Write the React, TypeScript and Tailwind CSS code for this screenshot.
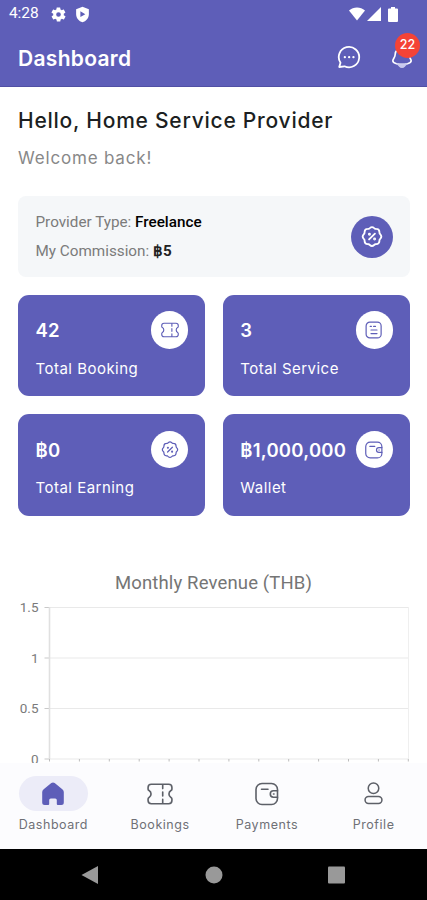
import React, { useState } from 'react';

type IconProps = { className?: string; strokeWidth?: number };

const stroke = {
  viewBox: '0 0 24 24',
  fill: 'none',
  stroke: 'currentColor',
  strokeLinecap: 'round',
  strokeLinejoin: 'round',
} as const;

function TicketIcon({ className, strokeWidth = 1.5 }: IconProps) {
  return (
    <svg {...stroke} strokeWidth={strokeWidth} className={className}>
      <path d="M4 3h16a3 3 0 0 1 3 3v1.500c0 .7-.4 1-.9 1.300a3.700 3.700 0 0 0 0 6.400c.5.300.9.600.9 1.300V18a3 3 0 0 1-3 3H4a3 3 0 0 1-3-3v-1.500c0-.7.4-1 .9-1.300a3.700 3.700 0 0 0 0-6.400C1.400 8.500 1 8.200 1 7.500V6a3 3 0 0 1 3-3z" />
      <path d="M14.500 3.500v3.500M14.500 10.200v3.600M14.500 17v3.500" />
    </svg>
  );
}

function ListIcon({ className, strokeWidth = 1.6 }: IconProps) {
  return (
    <svg {...stroke} strokeWidth={strokeWidth} className={className}>
      <rect x="1.500" y="1.500" width="20" height="21" rx="5" />
      <path d="M7 7.200h1.500M8 12h8M8 16.800h8M11.500 7.200H14" />
    </svg>
  );
}

function PercentIcon({ className, strokeWidth = 1.6 }: IconProps) {
  return (
    <svg {...stroke} strokeWidth={strokeWidth} className={className}>
      <path d="M9.600 2.300a3.600 3.600 0 0 1 4.800 0l1 .8 1.300.1a3.600 3.600 0 0 1 3.400 3.400l.1 1.300.9 1.200a3.600 3.600 0 0 1 0 4.800l-.9 1.100-.1 1.400a3.600 3.600 0 0 1-3.400 3.400l-1.300.1-1.100.9a3.600 3.600 0 0 1-4.700 0l-1-.9-1.300-.1a3.600 3.600 0 0 1-3.400-3.400l-.1-1.400-.9-1.100a3.600 3.600 0 0 1 0-4.800l.9-1.200.1-1.300a3.600 3.600 0 0 1 3.400-3.400l1.300-.1z" />
      <path d="M15.200 8.300l-6.400 6.400" />
      <circle cx="9.200" cy="9" r=".6" fill="currentColor" />
      <circle cx="14.800" cy="14.200" r=".6" fill="currentColor" />
    </svg>
  );
}

function WalletIcon({ className, strokeWidth = 1.6 }: IconProps) {
  return (
    <svg {...stroke} strokeWidth={strokeWidth} className={className}>
      <rect x="1" y="1.500" width="21.500" height="21" rx="6" />
      <path d="M22.500 8.800h-4a3.200 3.200 0 0 0 0 6.400h4M18.500 12h.5M6.500 7.200H13" />
    </svg>
  );
}

function ProfileIcon({ className }: IconProps) {
  return (
    <svg {...stroke} strokeWidth={1.6} className={className}>
      <circle cx="12" cy="6.500" r="5.500" />
      <rect x="3.200" y="15.200" width="17.600" height="7.300" rx="3.600" />
    </svg>
  );
}

function HomeIcon({ className }: IconProps) {
  return (
    <svg viewBox="0 0 24 24" fill="currentColor" className={className}>
      <path d="M10.300 1.100a2.800 2.800 0 0 1 3.400 0l7.600 6.200A3.400 3.400 0 0 1 22.800 10v10.500a2.500 2.500 0 0 1-2.500 2.500h-3.500a1 1 0 0 1-1-1v-4a1.600 1.600 0 0 0-1.600-1.600H9.800A1.600 1.600 0 0 0 8.200 18v4a1 1 0 0 1-1 1H3.700a2.500 2.500 0 0 1-2.500-2.500V10a3.400 3.400 0 0 1 1.500-2.700z" />
    </svg>
  );
}

const stats = [
  { value: '42', label: 'Total Booking', Icon: TicketIcon },
  { value: '3', label: 'Total Service', Icon: ListIcon },
  { value: '฿0', label: 'Total Earning', Icon: PercentIcon },
  { value: '฿1,000,000', label: 'Wallet', Icon: WalletIcon },
];

const tabs = [
  { id: 'dashboard', label: 'Dashboard', Icon: HomeIcon },
  { id: 'bookings', label: 'Bookings', Icon: TicketIcon },
  { id: 'payments', label: 'Payments', Icon: WalletIcon },
  { id: 'profile', label: 'Profile', Icon: ProfileIcon },
];

function StatusBar() {
  return (
    <div className="flex h-7 items-center pl-[9px] pr-[29px] text-white">
      <span className="w-[41px] font-['Roboto',sans-serif] text-[15.5px] tracking-[-0.1px]">4:28</span>
      <svg viewBox="0 0 24 24" className="h-[17px] w-[17px]" fill="currentColor">
        <path fillRule="evenodd" d="M19.400 13c.1-.3.1-.7.1-1s0-.7-.1-1l2.100-1.600c.2-.2.200-.4.100-.6l-2-3.500c-.1-.2-.4-.3-.6-.2l-2.500 1c-.5-.4-1.100-.7-1.700-1l-.4-2.600c0-.3-.2-.5-.5-.5h-4c-.2 0-.5.2-.5.4l-.4 2.700c-.6.2-1.100.6-1.700 1l-2.500-1c-.2-.1-.5 0-.6.2l-2 3.500c-.1.2-.1.500.1.600L4.600 11a8 8 0 0 0 0 2l-2.100 1.600c-.2.200-.2.400-.1.600l2 3.500c.1.200.4.300.6.200l2.500-1c.5.400 1.100.7 1.700 1l.4 2.600c0 .3.300.5.500.5h4c.3 0 .500-.2.500-.4l.4-2.700c.6-.2 1.200-.6 1.700-1l2.500 1c.2.100.5 0 .6-.2l2-3.500c.1-.2.1-.5-.1-.6zM12 15.300a3.300 3.300 0 1 1 0-6.600 3.300 3.300 0 0 1 0 6.600z" />
      </svg>
      <svg viewBox="0 0 24 24" className="ml-[7px] h-[17px] w-[17px]" fill="currentColor">
        <path fillRule="evenodd" d="M12 1L3 4.600v7c0 5.200 3.900 10 9 11.400 5.100-1.400 9-6.200 9-11.400v-7zM9 7.500l7 4-7 4z" />
      </svg>
      <svg viewBox="0 0 16 14" className="ml-auto h-[14px] w-[16px]" fill="currentColor">
        <path d="M0 3.500C4.500-.6 11.500-.6 16 3.500L8 13.500z" />
      </svg>
      <svg viewBox="0 0 14 14" className="ml-[2px] h-[14px] w-[14px]" fill="currentColor">
        <path d="M14 0v14H0z" />
      </svg>
      <svg viewBox="0 0 10 15" className="ml-[7px] h-[15px] w-[10px]" fill="currentColor">
        <path d="M3 0h4v1.500h2a1 1 0 0 1 1 1V14a1 1 0 0 1-1 1H1a1 1 0 0 1-1-1V2.500a1 1 0 0 1 1-1h2z" />
      </svg>
    </div>
  );
}

function RevenueChart() {
  const rows = [
    { label: '1.5', y: 17.5 },
    { label: '1', y: 68 },
    { label: '0.5', y: 118.5 },
    { label: '0', y: 169 },
  ];
  const ticks = Array.from({ length: 13 }, (_, i) => 49.5 + i * 29.9);

  return (
    <svg width="427" height="200" className="block shrink-0">
      {rows.map(r => (
        <g key={r.label}>
          <path d={`M50 ${r.y}H408`} stroke="#e9e9e9" strokeWidth="1.2" />
          <path d={`M44.500 ${r.y}H50`} stroke="#c9c9c9" strokeWidth="1" />
          <text x="38.500" y={r.y + 4.5} textAnchor="end" fontSize="13.5" fill="#7a7a7a" fontFamily="Roboto, sans-serif">{r.label}</text>
        </g>
      ))}
      <path d="M49.500 17v152" stroke="#e0e0e0" strokeWidth="1.600" />
      <path d="M408.500 17v152" stroke="#efefef" strokeWidth="1" />
      {ticks.map(x => (
        <path key={x} d={`M${x} 169v2.500`} stroke="#bdbdbd" strokeWidth="1" />
      ))}
    </svg>
  );
}

export default function App() {
  const [activeTab, setActiveTab] = useState('dashboard');

  return (
    <div className="flex h-[900px] w-[427px] flex-col overflow-hidden bg-white font-['Inter',sans-serif]">
      <header className="h-[87px] shrink-0 border-b border-[#5150a4] bg-[#5e5eb8]">
        <StatusBar />
        <div className="flex h-[58px] items-center pl-[18px] pr-[14px] text-white">
          <h1 className="mt-[3px] text-[21px] font-semibold tracking-[0.3px]">Dashboard</h1>
          <button className="ml-auto" aria-label="Messages">
            <svg {...stroke} strokeWidth="1.800" className="h-6 w-6">
              <path d="M2.200 22l1.300-4.200A10.200 10.200 0 1 1 7.500 21.300z" />
              <path d="M7.800 12.200h.1M12.100 12.200h.1M16.400 12.200h.1" strokeWidth="2.200" />
            </svg>
          </button>
          <button className="relative ml-[30px]" aria-label="Notifications">
            <svg {...stroke} strokeWidth="1.800" className="h-[22px] w-[22px]">
              <path d="M12 2a7.500 7.500 0 0 0-7.500 7.500c0 3-2.500 4.500-2.500 6.700 0 1.700 1.700 2.600 4 3.200 4 .9 8 .9 12 0 2.300-.6 4-1.500 4-3.200 0-2.200-2.500-3.700-2.500-6.700A7.500 7.500 0 0 0 12 2z" />
              <path d="M7 19.500c1.200 2.600 2.800 4 5 4s3.800-1.400 5-4c-3.300.6-6.700.6-10 0z" fill="#c9c9ee" stroke="#c9c9ee" strokeWidth="1" />
            </svg>
            <span className="absolute -top-[13px] left-[4px] flex h-[25px] w-[25px] items-center justify-center rounded-full bg-[#f44336] text-[12.500px] font-medium">22</span>
          </button>
        </div>
      </header>

      <main className="flex min-h-0 flex-1 flex-col overflow-hidden">
        <div className="px-[18px] pt-[20px]">
          <h2 className="whitespace-nowrap text-[21px] font-medium leading-[28px] tracking-[0.760px] text-[#1c1f22]">Hello, Home Service Provider</h2>
          <p className="mt-[11px] text-[17px] leading-6 tracking-[0.820px] text-[#888888]">Welcome back!</p>

          <div className="mt-[26px] flex h-[81px] w-[392px] items-center rounded-lg bg-[#f5f7f9] pl-[17.500px] pr-[17px] font-['Roboto',sans-serif] text-[15.250px] text-[#7b7b7b]">
            <div className="flex-1 leading-[29px]">
              <p>Provider Type: <b className="font-medium text-black">Freelance</b></p>
              <p>My Commission: <b className="font-bold text-[#222222]">฿5</b></p>
            </div>
            <div className="flex h-[42px] w-[42px] items-center justify-center rounded-full bg-[#5e5eb8] text-white">
              <PercentIcon className="h-[22px] w-[22px]" strokeWidth={2} />
            </div>
          </div>

          <div className="mt-[17.500px] grid w-[392px] grid-cols-2 gap-x-[17.500px] gap-y-[18px]">
            {stats.map(({ value, label, Icon }) => (
              <div key={label} className="h-[101.500px] rounded-[11px] bg-[#5e5eb8] pl-[17.500px] pr-[17px] pt-[17px] text-white">
                <div className="flex h-[37px] items-center justify-between">
                  <span className="mt-[2px] text-[18.500px] font-semibold tracking-[0.250px]">{value}</span>
                  <span className="flex h-[37.500px] w-[37.500px] shrink-0 items-center justify-center rounded-full bg-white text-[#5e5eb8]">
                    <Icon className="h-[18px] w-[18px]" />
                  </span>
                </div>
                <p className="mt-[9px] text-[15px] leading-[22px] tracking-[0.480px]">{label}</p>
              </div>
            ))}
          </div>
        </div>

        <h3 className="mt-[57px] shrink-0 text-center font-['Roboto',sans-serif] text-[18.500px] leading-5 tracking-[0.150px] text-[#757575]">Monthly Revenue (THB)</h3>
        <div className="-mt-[3px]">
          <RevenueChart />
        </div>
      </main>

      <nav className="flex h-[86px] shrink-0 bg-[#fcfcfe]">
        {tabs.map(({ id, label, Icon }) => (
          <button key={id} onClick={() => setActiveTab(id)} className="flex flex-1 flex-col items-center pt-[13px]">
            <span className={`flex h-[35px] w-[69px] items-center justify-center rounded-full ${activeTab === id ? 'bg-[#ececf8] text-[#5e5eb8]' : 'text-[#5d6068]'}`}>
              <Icon className={id === 'bookings' ? 'h-[26px] w-[26px]' : id === 'profile' ? 'h-[23px] w-[23px]' : 'h-6 w-6'} />
            </span>
            <span className="mt-[5px] text-[12.500px] leading-[18px] tracking-[0.550px] text-[#6f7076]">{label}</span>
          </button>
        ))}
      </nav>

      <div className="flex h-[51px] shrink-0 items-center justify-between bg-black pl-[81px] pr-[82px]">
        <svg width="18" height="20" viewBox="0 0 18 20" fill="#999999"><path d="M17 1v18L.5 10z" /></svg>
        <svg width="18" height="18" viewBox="0 0 18 18" fill="#999999"><circle cx="9" cy="9" r="8.500" /></svg>
        <svg width="17" height="18" viewBox="0 0 17 18" fill="#999999"><rect y=".5" width="17" height="17" rx="1" /></svg>
      </div>
    </div>
  );
}
